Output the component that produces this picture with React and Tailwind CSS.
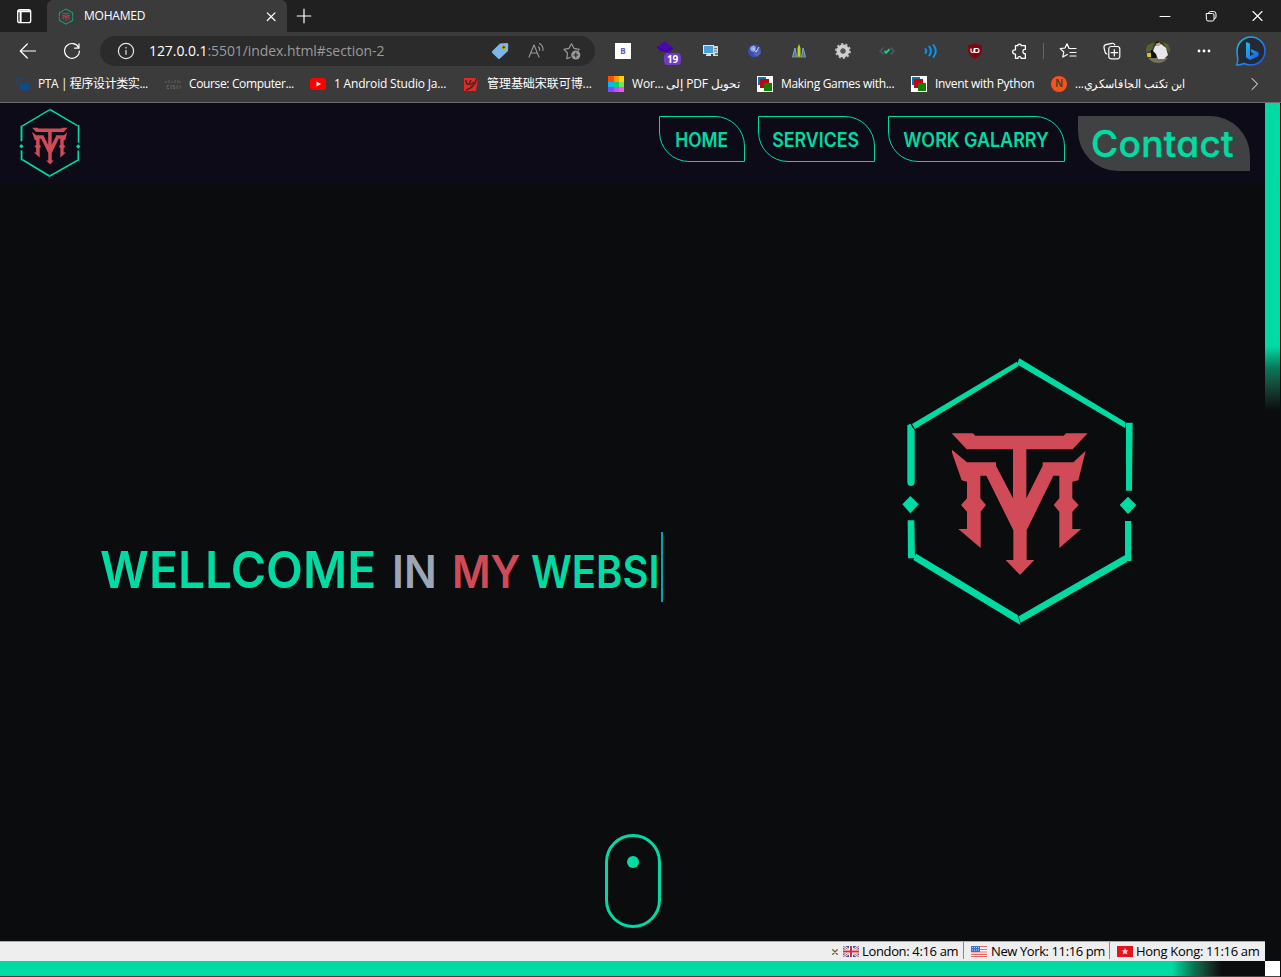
import React from "react";

function Logo({ className, thick = 0 }) {
  return (
    <svg viewBox="0 0 780 870" preserveAspectRatio="none" className={className}>
      <g fill="#00dba4" stroke="#00dba4" strokeWidth={thick}>
        <path d="M380 50L386 63L75 252L66 237Z" />
        <path d="M388 40L707 232L705 249L381 58Z" />
        <path d="M52 241L61 236L74 257V410Q74 423 63 423Q52 423 52 410Z" />
        <path d="M708 233H728L726 437H708Z" />
        <path d="M61 453L86 478L61 505L37 478Z" />
        <path d="M714 455L739 480L714 507L689 480Z" />
        <path d="M53 526H73L75 640H54Z" />
        <path d="M705 528H724V648H705Z" />
        <path d="M79 626L384 811L391 840L70 645Z" />
        <path d="M704 631L711 651L392 833L386 814Z" />
      </g>
      <g fill="#d04b57">
        <path d="M185 265H249L256 272H521L528 265H593L548 313H409V460L458 362V352H550L587 317L565 406L547 410V460L566 480L547 500V552H574L508 609V500L491 480L508 460V392H490L410 556V645H433L390 690L347 645H370V556L289 392H271V460L288 480L272 500V609L205 552H231V500L213 480L231 460V410L215 406L186 323V314L231 352H318V362L369 460V313H230Z" />
      </g>
    </svg>
  );
}

function Cell({ children, className = "w-11" }) {
  return <div className={"flex h-full shrink-0 items-center justify-center " + className}>{children}</div>;
}

function Line({ d, size = 16, color = "#fff", width = 1.2, box = 16 }) {
  return (
    <svg width={size} height={size} viewBox={`0 0 ${box} ${box}`} fill="none" stroke={color} strokeWidth={width} strokeLinecap="round" strokeLinejoin="round" className="shrink-0">
      <path d={d} />
    </svg>
  );
}

function TabStrip() {
  return (
    <div className="flex h-8 shrink-0 bg-[#202020]">
      <div className="flex w-[47px] items-center justify-center">
        <svg width="16" height="16" viewBox="0 0 16 16" fill="none" stroke="#fff" strokeWidth="1.3">
          <rect x="1.7" y="1.7" width="13" height="13" rx="2" />
          <path d="M2 3.2H14.5M4.6 4V14.6" strokeWidth="2" />
        </svg>
      </div>
      <div className="flex w-60 items-center rounded-t-md bg-[#3b3b3b] pr-2 pl-[11px]">
        <Logo className="h-[17px] w-4 opacity-80" thick={18} />
        <span className="ml-[10px] flex-1 text-xs tracking-[-0.2px] text-white">MOHAMED</span>
        <Line d="M4.3 4.8L12 12.5M12 4.8L4.3 12.5" size={16} />
      </div>
      <div className="flex w-[34px] items-center justify-center">
        <Line d="M8 1.2V14.8M1.2 8H14.8" />
      </div>
      <div className="flex-1" />
      <Cell className="w-[46px]"><Line d="M3 8.5H13" width={1} /></Cell>
      <Cell className="w-[46px]">
        <Line d="M3.5 5.5H9.5Q11 5.5 11 7V11.5Q11 13 9.5 13H5Q3.5 13 3.5 11.5ZM5.5 5.5V5Q6 3.5 7.5 3.5H10.5Q13 3.5 13 6V9Q13 10.5 11.2 11" width={1} />
      </Cell>
      <Cell className="w-[47px]"><Line d="M3 3.5L12 12.5M12 3.5L3 12.5" width={1.1} /></Cell>
    </div>
  );
}

function AddressBar() {
  return (
    <div className="flex h-[30px] w-[495px] shrink-0 items-center rounded-full bg-[#2b2b2b] pr-[14px] pl-[17px]">
      <svg width="18" height="18" viewBox="0 0 18 18" fill="none" stroke="#e5e5e5" strokeWidth="1.2">
        <circle cx="9" cy="9" r="7.6" /><path d="M9 8V12.8M9 5V6.4" />
      </svg>
      <span className="ml-[14px] flex-1 text-sm tracking-[-0.07px] text-[#9a9a9a]">
        <span className="text-white">127.0.0.1</span>:5501/index.html#section-2
      </span>
      <svg width="18" height="18" viewBox="0 0 18 18" className="mr-[18px]">
        <path d="M9 1.5L16 1Q17.3 1 17.3 2.5L17 9L9 16.5Q8 17.4 7 16.4L1.3 11Q.4 10 1.3 9Z" fill="#7db7e8" />
        <circle cx="12.8" cy="5.3" r="1.6" fill="#333" stroke="#dda800" />
      </svg>
      <Line d="M2 15L7 3L12 15M3.8 11H10.2M11.5 5Q13 6.5 12.7 8.5M12.5 1.5Q16.5 4 16 8.5" box={18} size={18} color="#999" width={1.1} />
      <svg width="18" height="18" viewBox="0 0 18 18" fill="none" stroke="#999" strokeWidth="1.2" strokeLinejoin="round" className="ml-[18px]">
        <path d="M7.5 15.2L3.8 16.8L4.5 11L1 7.3L6 6.3L8.5 1.8L11 6.3L16.2 7.3L15 8.5" />
        <circle cx="12.8" cy="13" r="4.6" fill="#999" stroke="none" />
        <path d="M12.8 10.6V15.4M10.4 13H15.2" stroke="#2b2b2b" />
      </svg>
    </div>
  );
}

function Toolbar() {
  return (
    <div className="flex h-[38px] shrink-0 items-center bg-[#3b3b3b] pl-1.5">
      <Cell><Line d="M16.5 9H1.5M8.3 2L1.3 9L8.3 16" size={18} box={18} /></Cell>
      <Cell className="mr-[6px] w-11"><Line d="M15.8 6A7.4 7.4 0 1 0 16.4 9M16 1.8V6.2H11.6" size={18} box={18} /></Cell>
      <AddressBar />
      <Cell className="ml-[6px] w-11">
        <div className="flex size-4 items-center justify-center bg-white text-[8px] font-bold text-[#6157b5]">B</div>
      </Cell>
      <Cell>
        <div className="relative ml-1 h-[26px] w-6">
          <svg width="16" height="16" viewBox="0 0 16 16" className="mt-0.5"><path d="M8 1L16 8L12 14L8 12L3 12L0 7Z" fill="#4a08ae" /><path d="M0 7L8 11L16 8" stroke="#32077b" fill="none" /></svg>
          <span className="absolute right-0 -bottom-px flex h-3 w-[17px] items-center justify-center rounded-sm bg-[#6f3cc4] text-[10px] font-bold tracking-[-0.3px] text-white">19</span>
        </div>
      </Cell>
      <Cell>
        <svg width="16" height="16" viewBox="0 0 16 16"><rect x=".5" y="2.5" width="10" height="8" fill="#4aa0dc" stroke="#dbe7ef" /><path d="M4 11H8V13H3V12Z" fill="#ddd" /><path d="M10 3H15V13H10Z" fill="#d5d5d5" /><path d="M11 5.5H14M11 8H14" stroke="#777" /><path d="M12 10h3v2h-3z" fill="#45a54a" /></svg>
      </Cell>
      <Cell>
        <svg width="16" height="16" viewBox="0 0 16 16"><circle cx="7.5" cy="8" r="6.5" fill="#3450b4" /><path d="M3 5Q7 0 9 5L7 9L4 8Z" fill="#91a9e7" /><path d="M7 9L12 6L14 10Q11 15 7 12Z" fill="#5265b5" /><path d="M6 5L9 9L12 4" stroke="#e4d8c0" fill="none" /></svg>
      </Cell>
      <Cell>
        <svg width="16" height="16" viewBox="0 0 16 16"><path d="M1.5 14L4 5L5.5 14" fill="#4970bb" stroke="#8ba1d0" /><path d="M10.5 14L12 5L14.5 14" fill="#4970bb" stroke="#8ba1d0" /><path d="M8 1L9.5 5V14H6.5V5Z" fill="#b9d900" /><path d="M1 14H15" stroke="#749a57" /></svg>
      </Cell>
      <Cell>
        <svg width="18" height="18" viewBox="0 0 18 18"><circle cx="9" cy="9" r="6.8" fill="none" stroke="#bdbdbd" strokeWidth="2.2" strokeDasharray="2.2 2.07" /><circle cx="9" cy="9" r="4.5" fill="none" stroke="#cfcfcf" strokeWidth="4" /><circle cx="9" cy="9" r="2.5" fill="#555" /></svg>
      </Cell>
      <Cell>
        <svg width="16" height="16" viewBox="0 0 16 16" fill="none"><path d="M4.5 4.5L1 8L4.5 11.5M11.5 4.5L15 8L11.5 11.5" stroke="#4d5a6c" strokeWidth="1.5" /><path d="M5.5 8L7 9.8L10.5 6.3" stroke="#08d782" strokeWidth="2" /></svg>
      </Cell>
      <Cell><Line d="M2.5 6Q4 8 2.5 10M6.3 3.5Q9.5 8 6.3 12.5M10.5 2Q15 8 10.5 14" color="#0794f5" width={2} /></Cell>
      <Cell>
        <svg width="16" height="16" viewBox="0 0 16 16"><path d="M8 .5Q11 2.3 15 2.3V8Q14 13 8 16Q2 13 1 8V2.3Q5 2.3 8 .5Z" fill="#800610" /><path d="M4 5.5V8Q4 9.5 5.5 9.5Q7 9.5 7 8V5.5M7.8 9.5V5.5H10Q12 5.5 12 7.5Q12 9.5 10 9.5Z" fill="none" stroke="#fff" strokeWidth="1.2" /></svg>
      </Cell>
      <Cell><Line d="M4.2 2.5H6.5Q6.3 1 8 1Q9.7 1 9.5 2.5H13.5V6Q11.2 5.8 11.2 8Q11.2 10.2 13.5 10V14.5H9.5Q9.7 12.8 8 12.8Q6.3 12.8 6.5 14.5H4.2V10.5Q1.5 10.5 1.5 8.3Q1.5 6.2 4.2 6.5Z" size={17} width={1.2} /></Cell>
      <div className="ml-0.5 h-4 w-px bg-[#666]" />
      <Cell className="ml-0.5 w-11">
        <Line d="M10 6.5H17M11 10.5H17M11 14H17M8.3 12.5L3.8 15L4.8 10L1.2 6.6L6 6L8 1.8L10 6.3" size={18} box={18} />
      </Cell>
      <Cell>
        <Line d="M4 12Q2.5 11.8 2 10L1 5.5Q.8 3.2 2.8 2.7L9 1.3Q11 1 11.8 3M5.8 6.5Q6 4.5 8 4.5H14.5Q16.8 4.7 16.8 7V14.5Q16.5 16.8 14.5 16.8H8Q5.8 16.5 5.8 14.5ZM11.3 7.5V14M8.1 10.7H14.6" size={18} box={18} />
      </Cell>
      <Cell className="w-12">
        <svg width="24" height="24" viewBox="0 0 24 24"><defs><clipPath id="face"><circle cx="12" cy="12" r="12" /></clipPath></defs><g clipPath="url(#face)"><path fill="#38401f" d="M0 0H24V24H0Z" /><path fill="#74725b" d="M0 19H24V24H0Z" /><path fill="#56613a" d="M0 7L8 3L6 11L0 14ZM17 3L24 6V14L20 10Z" /><path fill="#d7c02b" d="M1 14H5V18H1Z" /><path fill="#111" d="M5 11H10V19H5Z" /><path fill="#e8e7ee" d="M9 7L15 5L20 9L22 16L18 20H12L10 15L7 12Z" /><circle cx="12" cy="5" r="2.2" fill="#c6a48b" /><path fill="#171511" d="M9 5Q10 1 14 3L12 4Z" /></g></svg>
      </Cell>
      <Cell className="w-11"><svg width="14" height="4" fill="#fff"><circle cx="2" cy="2" r="1.4" /><circle cx="7" cy="2" r="1.4" /><circle cx="12" cy="2" r="1.4" /></svg></Cell>
      <Cell className="w-[50px]">
        <svg width="32" height="32" viewBox="0 0 32 32">
          <defs><linearGradient id="ring" x1="0" y1="0" x2="1" y2="1"><stop stopColor="#20bdf0" /><stop offset="1" stopColor="#2055e8" /></linearGradient></defs>
          <path d="M2 16A14 14 0 1 1 16 30Q12 30 9 28.5Q6 30 1.5 30Q3.5 26 2.5 21Q2 19 2 16Z" fill="#242a31" stroke="url(#ring)" strokeWidth="1.5" />
          <path d="M11 7L15 8.5V21L19 19L16.5 17.5L15.5 14L23 17Q25 20 22 22L15 25L11 22.5Z" fill="url(#ring)" />
        </svg>
      </Cell>
    </div>
  );
}

function Books() {
  return <svg width="16" height="16" className="shrink-0"><path fill="#fff" d="M0 0H16V16H0Z" /><path fill="#0874b9" d="M1 1H9V9H1Z" /><path fill="#c40310" d="M3 3H12V12H3Z" /><path fill="#167b00" d="M7 7H15V15H7Z" /></svg>;
}

function Bookmark({ icon, className, textClass = "", children }) {
  return (
    <div className={"flex shrink-0 items-center gap-2 " + className}>
      {icon}
      <span dir="ltr" className={"whitespace-nowrap " + textClass}>{children}</span>
    </div>
  );
}

function Bookmarks() {
  return (
    <div className="flex h-[33px] shrink-0 items-center border-b border-[#6d6d6d] bg-[#3b3b3b] pb-1 pl-[15px] text-xs text-white">
      <Bookmark className="w-[150px]" textClass="-ml-px tracking-[-0.4px]" icon={<svg width="16" height="16" className="shrink-0"><path d="M1 3H12V8H2V3M6 5V11" stroke="#174b82" fill="none" /><path d="M5 9L15 7V13Q10 16 5 13Z" fill="#0b4b91" /></svg>}>PTA | 程序设计类实...</Bookmark>
      <Bookmark className="w-[145px]" textClass="tracking-[-0.36px]" icon={<svg width="16" height="16" className="shrink-0"><path d="M1 5V7M4 4V7M7 5V7M10 4V7M13 4V7M15 5V7" stroke="#606060" /><path d="M4 9.5H2V12.5H4M6 9V13M10 9.5H8V11H10V12.5H8M13 9.5H12V12.5H13M15 9.5V12.5" stroke="#606060" fill="none" /></svg>}>Course: Computer...</Bookmark>
      <Bookmark className="w-[153px]" textClass="tracking-[-0.18px]" icon={<svg width="16" height="16" className="shrink-0"><rect y="2" width="16" height="12" rx="3" fill="#f00" /><path d="M6.5 5.5L11 8L6.5 10.5Z" fill="#fff" /></svg>}>1 Android Studio Ja...</Bookmark>
      <Bookmark className="w-[145px]" textClass="tracking-[-0.05px]" icon={<svg width="16" height="16" className="shrink-0"><path d="M1 2H14L15 1L13 15H1Z" fill="#e82720" /><path d="M3 4Q3 9 6 8L8 4M14 2Q11 12 3 14M7 9L11 6" stroke="#3b2925" strokeWidth="1.5" fill="none" /></svg>}>管理基础宋联可博...</Bookmark>
      <Bookmark className="w-[149px]" textClass="tracking-[-0.2px]" icon={<svg width="16" height="16" className="shrink-0"><path fill="#ff4d00" d="M0 0H6V6H0Z" /><path fill="#ff9800" d="M6 0H11V6H6Z" /><path fill="#ffd500" d="M11 0H16V6H11Z" /><path fill="#00b8ff" d="M0 6H6V11H0Z" /><path fill="#00d66b" d="M6 6H11V11H6Z" /><path fill="#7de052" d="M11 6H16V11H11Z" /><path fill="#7c4dff" d="M0 11H6V16H0Z" /><path fill="#c44dff" d="M6 11H11V16H6Z" /><path fill="#f94dff" d="M11 11H16V16H11Z" /></svg>}>Wor... <bdi dir="rtl">تحويل PDF إلى</bdi></Bookmark>
      <Bookmark className="w-[154px]" textClass="tracking-[-0.3px]" icon={<Books />}>Making Games with...</Bookmark>
      <Bookmark className="w-[140px]" textClass="tracking-[-0.3px]" icon={<Books />}>Invent with Python</Bookmark>
      <Bookmark className="w-[180px]" textClass="origin-left scale-x-[.925]" icon={<div className="flex size-4 shrink-0 items-center justify-center rounded-full bg-[#ff4f1b] text-[10px] font-bold text-[#443]">N</div>}>...<bdi dir="rtl">اين تكتب الجافاسكري</bdi></Bookmark>
      <div className="ml-[15px]"><Line d="M6 2.5L11.5 8L6 13.5" width={1} /></div>
    </div>
  );
}

function NavLink({ className, textClass, children }) {
  return (
    <div className={"flex h-[46px] items-center justify-center rounded-tr-[30px] rounded-bl-[30px] border border-[#00dba4] " + className}>
      <span className={"mt-[3px] -ml-px text-[19.5px] font-semibold whitespace-nowrap " + textClass}>{children}</span>
    </div>
  );
}

function Header() {
  return (
    <header className="flex h-20 shrink-0 items-start bg-[#0e0b18] pr-[15px] pl-4 text-[#00dba4]">
      <Logo className="mt-[2px] h-[75px] w-[68px]" />
      <nav className="mt-[13px] ml-auto flex items-start gap-[13px] font-['Inter',sans-serif]">
        <NavLink className="w-[86px]" textClass="scale-x-[.89]">HOME</NavLink>
        <NavLink className="w-[117px]" textClass="scale-x-[.91]">SERVICES</NavLink>
        <NavLink className="w-[177px]" textClass="scale-x-[.92]">WORK GALARRY</NavLink>
        <div className="flex h-[55px] w-[172px] items-center justify-center rounded-tr-[40px] rounded-bl-[40px] bg-[#404142]">
          <span className="-mt-px -ml-[3px] text-[37px] leading-none font-medium tracking-[0.3px] [font-feature-settings:'cv11'] [-webkit-text-stroke:0.4px_#00dba4]">Contact</span>
        </div>
      </nav>
    </header>
  );
}

function Hero() {
  return (
    <main className="flex flex-1 flex-col bg-[#0a0c0d]">
      <div className="flex h-[650px] items-start">
        <div className="mt-[349px] ml-[100px] flex h-[70px] w-[563px] items-baseline border-r-2 border-[#00a5b0] font-['Inter',sans-serif] text-[45px] leading-[76px] font-semibold whitespace-nowrap text-[#00dba4]">
          <span className="w-[292px] shrink-0 origin-left scale-x-[.94] text-[51px]">WELLCOME</span>
          <span className="w-[60px] shrink-0 origin-left scale-x-[.96] text-[#9ba7b8]">IN</span>
          <span className="w-[79px] shrink-0 origin-left scale-x-[.93] text-[#d04b57]">MY</span>
          <span className="w-[130px] shrink-0 origin-left scale-x-[.89]">WEBSI</span>
        </div>
        <Logo className="mt-[162px] ml-[227px] h-[290px] w-[260px] shrink-0" />
      </div>
      <div className="mt-px ml-[605px] flex h-[94px] w-14 justify-center rounded-full border-[3px] border-[#00dba4]">
        <div className="mt-[19px] size-3 rounded-full bg-[#00dba4]" />
      </div>
    </main>
  );
}

function ClockBar() {
  return (
    <div className="flex h-5 shrink-0 items-center justify-end border-t border-[#aaa] bg-[#eee] pr-[5px] text-[13px] text-black">
      <Line d="M3 3L8 8M8 3L3 8" size={10} box={11} color="#75601d" width={1.4} />
      <svg width="16" height="11" className="mr-[3px] ml-[3px]"><path fill="#3456a4" d="M0 0H16V11H0Z" /><path d="M0 0L16 11M16 0L0 11" stroke="#fff" strokeWidth="2.5" /><path d="M0 0L16 11M16 0L0 11" stroke="#d34a55" /><path d="M8 0V11M0 5.5H16" stroke="#fff" strokeWidth="4" /><path d="M8 0V11M0 5.5H16" stroke="#d22e3e" strokeWidth="2" /></svg>
      <span className="w-[96px] whitespace-nowrap tracking-[-0.35px]">London: 4:16 am</span>
      <div className="mr-[7px] ml-[5px] h-[17px] w-px self-start bg-[#888]" />
      <svg width="16" height="11" className="mr-1"><path fill="#fff" d="M0 0H16V11H0Z" /><path d="M0 .5H16M0 3.5H16M0 6H16M0 8.3H16M0 10.5H16" stroke="#ee6565" strokeWidth="1.2" /><path d="M0 0H9V6H0Z" fill="#3e70d0" /><path d="M1 1.5H8M1 4H8" stroke="#b9cff5" strokeDasharray="1 1" /></svg>
      <span className="w-[113px] whitespace-nowrap tracking-[-0.4px]">New York: 11:16 pm</span>
      <div className="mr-[7px] ml-[5px] h-[17px] w-px self-start bg-[#888]" />
      <svg width="16" height="11" className="mr-[3px]"><path fill="#e4141e" d="M0 0H16V11H0Z" /><path d="M8 2L9 4.3L11.2 4.3L9.7 6L10.3 8.6L8 7.2L5.7 8.6L6.3 6L4.8 4.3H7Z" fill="#fcc" /></svg>
      <span className="w-[124px] whitespace-nowrap tracking-[-0.3px]">Hong Kong: 11:16 am</span>
    </div>
  );
}

export default function App() {
  return (
    <div className="flex h-[977px] w-[1281px] flex-col overflow-hidden bg-[#0a0c0d] font-['Open_Sans','Noto_Sans_CJK_SC',sans-serif]">
      <TabStrip />
      <Toolbar />
      <Bookmarks />
      <div className="flex min-h-0 flex-1">
        <div className="flex w-[1265px] flex-col">
          <Header />
          <Hero />
          <ClockBar />
          <div className="h-[15px] shrink-0 bg-linear-to-r from-[#00dba4] from-[1172px] via-[#06704f] via-[1195px] to-[#0a0c0d] to-[1222px]" />
          <div className="h-px shrink-0 bg-[#444]" />
        </div>
        <div className="flex w-[15px] flex-col">
          <div className="flex-1 bg-linear-to-b from-[#00dba4] from-[243px] via-[#077558] via-[266px] to-[#0a0c0d] to-[308px]" />
          <div className="h-[15px] bg-white" />
          <div className="h-px bg-[#444]" />
        </div>
      </div>
    </div>
  );
}
